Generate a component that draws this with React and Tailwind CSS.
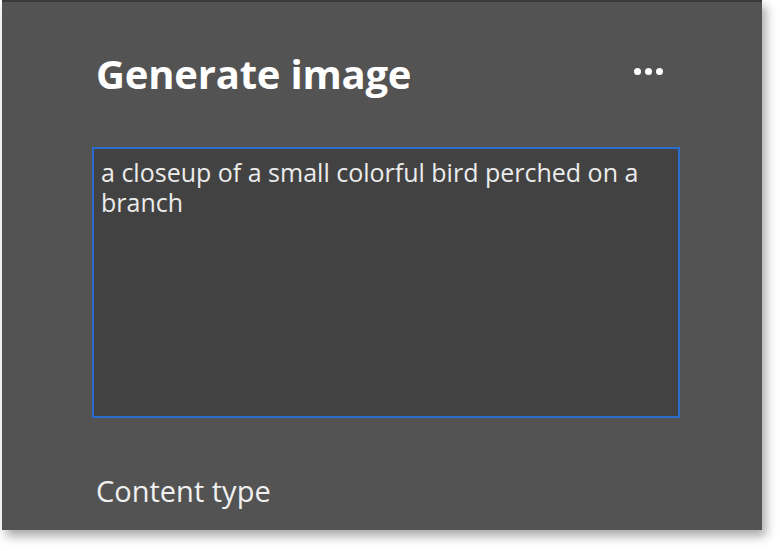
import React from 'react';

const font = { fontFamily: '"Open Sans", "Noto Sans", sans-serif' };

export default function App() {
  return (
    <div className="w-[780px] h-[551px] bg-white overflow-hidden" style={font}>
      <div className="ml-[2px] w-[760px] h-[530px] bg-[#535353] border-t-2 border-[#3a3a3a] shadow-[4px_6px_10px_rgba(0,0,0,0.35)] pl-[94px] pr-[100px] pt-[48px]">
        <div className="flex items-center justify-between h-[48px]">
          <h1 className="text-[40px] font-bold text-white leading-[48px] tracking-[-0.2px]">Generate image</h1>
          <div className="flex gap-[4px] mr-[-1px] mt-[-6px]">
            <span className="w-[7px] h-[7px] rounded-full bg-white" />
            <span className="w-[7px] h-[7px] rounded-full bg-white" />
            <span className="w-[7px] h-[7px] rounded-full bg-white" />
          </div>
        </div>
        <div className="mt-[49px] ml-[-4px] w-[588px] h-[271px] bg-[#424242] border-2 border-[#2a6ccf] px-[7px] pt-[8px] text-[25px] leading-[30px] text-[#ececec]">
          a closeup of a small colorful bird perched on a branch
        </div>
        <div className="mt-[53px] text-[29px] leading-[40px] text-[#f0f0f0]">Content type</div>
      </div>
    </div>
  );
}
